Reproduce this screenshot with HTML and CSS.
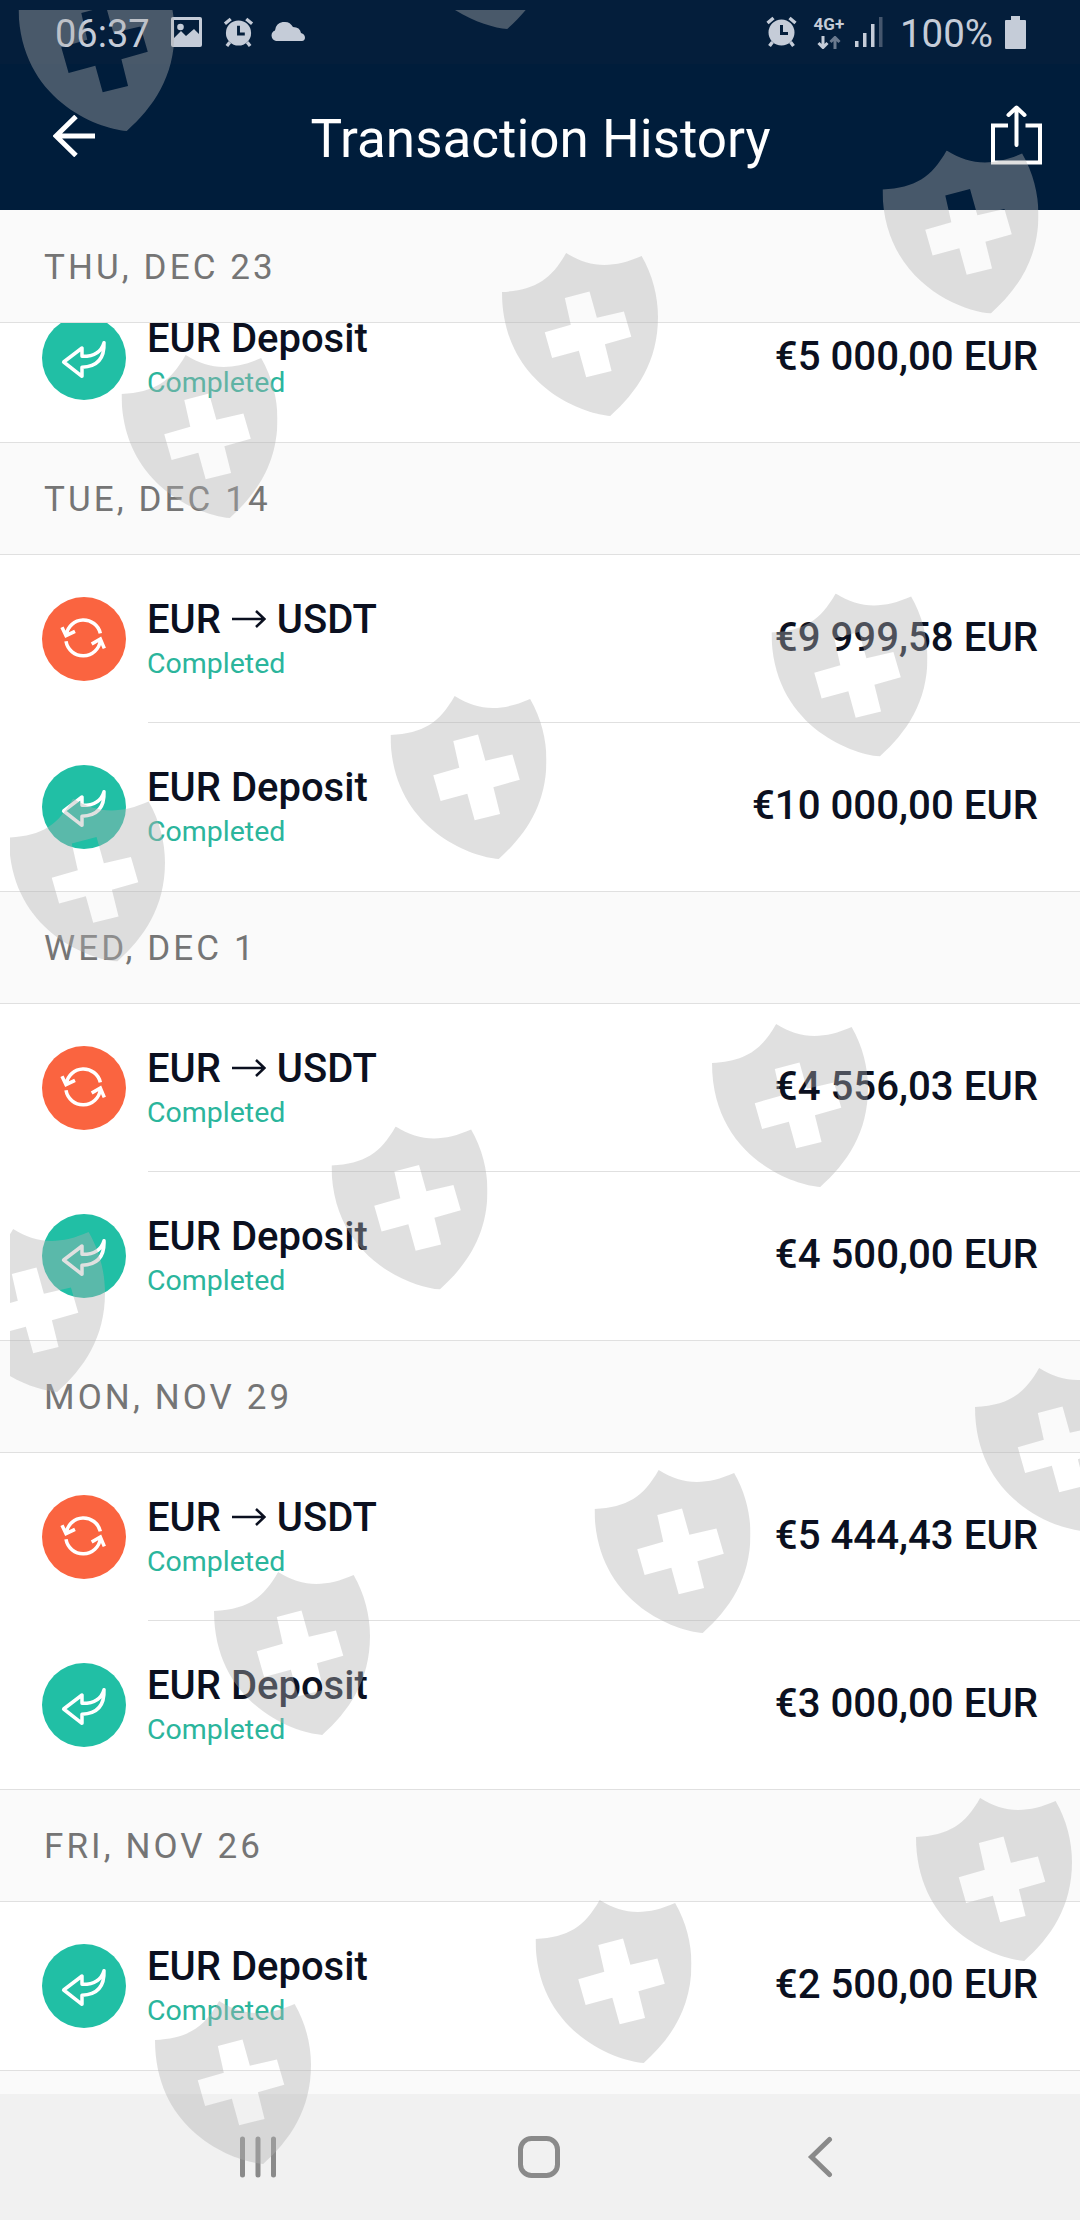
FILE: index.html
```html
<!DOCTYPE html>
<html lang="en">
  <head>
    <meta charset="UTF-8" />
    <meta name="viewport" content="width=device-width, initial-scale=1.0" />
    <title>Transaction History</title>
    <link rel="stylesheet" href="styles.css">
  </head>
  <body>
    <svg class="defs">
      <symbol id="shield" viewBox="66 69 467 488">
        <path fill-rule="evenodd" d="M66 186C165 180 212 150 258 69C330 115 400 115 484 78C517 135 533 200 533 260C533 395 470 485 390 557C300 550 66 460 66 186ZM254 204L272 284L194 306L216 383L296 362L318 441L394 422L374 342L453 320L431 244L350 263L328 184Z" />
      </symbol>
      <symbol id="deposit" viewBox="0 0 252 252">
        <path d="M65 138L120 96V121Q174 122 186 80Q189 151 120 154V181Z" />
      </symbol>
      <symbol id="swap" viewBox="0 0 252 252">
        <path d="M175 109A52 52 0 0 0 73 113M60 91L72 116L99 103M72 133A52 52 0 0 0 175 130M149 141L175 126L187 154" />
      </symbol>
      <symbol id="alarm" viewBox="0 0 32 32">
        <path d="M7 26L4 30M25 26L28 30M2 7L8 2M30 7L24 2" fill="none" stroke="currentColor" stroke-width="3.4" />
        <path fill-rule="evenodd" d="M16 3.500A13 13 0 1 0 16 29.500A13 13 0 1 0 16 3.500ZM14.500 9H17.500V16H22.500V19H14.500Z" />
      </symbol>
      <symbol id="arrow" viewBox="0 0 34 20">
        <path d="M0 10H32M24 2L32.500 10L24 18" />
      </symbol>
    </svg>

    <header class="top">
      <div class="status">
        <span class="time">06:37</span>
        <svg class="icon-image" viewBox="0 0 31 30">
          <path fill-rule="evenodd" d="M2 0H29Q31 0 31 2V28Q31 30 29 30H2Q0 30 0 28V2Q0 0 2 0ZM3 3V21L10 14L15 19L23 12L28 17V3Z" />
          <circle cx="9.500" cy="10" r="3.300" />
        </svg>
        <svg class="icon-alarm"><use href="#alarm" /></svg>
        <svg class="icon-cloud" viewBox="0 0 35 20">
          <path d="M6 20A5.500 5.500 0 0 1 5 9.500A9.600 9.600 0 0 1 23 6Q30 6 31 12Q35 13 35 17Q34.500 20 32 20Z" />
        </svg>
        <span class="spacer"></span>
        <svg class="icon-alarm right"><use href="#alarm" /></svg>
        <div class="network">
          <span>4G+</span>
          <svg viewBox="0 0 24 13">
            <path d="M6 0V11M1.500 7L6 11.500L10.500 7" />
            <path class="dim" d="M18 13V2M13.500 6L18 1.500L22.500 6" />
          </svg>
        </div>
        <svg class="icon-signal" viewBox="0 0 28 30">
          <path d="M0 24H3.500V30H0ZM8 16H11.500V30H8ZM16 7H19.500V30H16Z" />
          <path class="faded" d="M24 0H27.500V30H24Z" />
        </svg>
        <span class="percent">100%</span>
        <svg class="icon-battery" viewBox="0 0 21 33">
          <path d="M6 0H15V4H20Q21 4 21 5V32Q21 33 20 33H1Q0 33 0 32V5Q0 4 1 4H6Z" />
        </svg>
      </div>
      <div class="toolbar">
        <svg class="icon-back" viewBox="0 0 42 42">
          <path d="M42 21H3M23 1.500L3 21L23 40.500" />
        </svg>
        <h1>Transaction History</h1>
        <svg class="icon-share" viewBox="0 0 51 60">
          <path d="M17 20.500H2V57.500H49V20.500H34.500" />
          <path class="round" d="M25.500 40V3M17.500 10L25.500 2.500L33.500 10" />
        </svg>
      </div>
    </header>

    <main class="history">
      <section class="day">
        <h2>Thu, Dec 23</h2>
        <div class="row scrolled">
          <svg class="badge deposit"><use href="#deposit" /></svg>
          <div class="info">
            <p class="name">EUR Deposit</p>
            <p class="state">Completed</p>
          </div>
          <p class="amount">€5 000,00 EUR</p>
        </div>
      </section>

      <section class="day">
        <h2>Tue, Dec 14</h2>
        <div class="row">
          <svg class="badge swap"><use href="#swap" /></svg>
          <div class="info">
            <p class="name">EUR <svg class="arrow"><use href="#arrow" /></svg> USDT</p>
            <p class="state">Completed</p>
          </div>
          <p class="amount">€9 999,58 EUR</p>
        </div>
        <div class="row">
          <svg class="badge deposit"><use href="#deposit" /></svg>
          <div class="info">
            <p class="name">EUR Deposit</p>
            <p class="state">Completed</p>
          </div>
          <p class="amount">€10 000,00 EUR</p>
        </div>
      </section>

      <section class="day">
        <h2>Wed, Dec 1</h2>
        <div class="row">
          <svg class="badge swap"><use href="#swap" /></svg>
          <div class="info">
            <p class="name">EUR <svg class="arrow"><use href="#arrow" /></svg> USDT</p>
            <p class="state">Completed</p>
          </div>
          <p class="amount">€4 556,03 EUR</p>
        </div>
        <div class="row">
          <svg class="badge deposit"><use href="#deposit" /></svg>
          <div class="info">
            <p class="name">EUR Deposit</p>
            <p class="state">Completed</p>
          </div>
          <p class="amount">€4 500,00 EUR</p>
        </div>
      </section>

      <section class="day">
        <h2>Mon, Nov 29</h2>
        <div class="row">
          <svg class="badge swap"><use href="#swap" /></svg>
          <div class="info">
            <p class="name">EUR <svg class="arrow"><use href="#arrow" /></svg> USDT</p>
            <p class="state">Completed</p>
          </div>
          <p class="amount">€5 444,43 EUR</p>
        </div>
        <div class="row">
          <svg class="badge deposit"><use href="#deposit" /></svg>
          <div class="info">
            <p class="name">EUR Deposit</p>
            <p class="state">Completed</p>
          </div>
          <p class="amount">€3 000,00 EUR</p>
        </div>
      </section>

      <section class="day">
        <h2>Fri, Nov 26</h2>
        <div class="row">
          <svg class="badge deposit"><use href="#deposit" /></svg>
          <div class="info">
            <p class="name">EUR Deposit</p>
            <p class="state">Completed</p>
          </div>
          <p class="amount">€2 500,00 EUR</p>
        </div>
      </section>
      <div class="next-day"></div>
    </main>

    <nav class="nav">
      <svg viewBox="0 0 42 42"><path d="M5.500 3V39M21 3V39M36.500 3V39" /></svg>
      <svg viewBox="0 0 42 42"><rect x="2.500" y="2.500" width="37" height="37" rx="11" /></svg>
      <svg viewBox="0 0 42 42"><path d="M30.500 3.500L12.500 21L30.500 38.500" /></svg>
    </nav>

    <!-- watermark -->
    <svg class="watermark" viewBox="10 10 1070 2210">
      <use href="#shield" x="399" y="-134" width="156" height="163" />
      <use href="#shield" x="18.500" y="-32" width="156" height="163" />
      <use href="#shield" x="882.500" y="150.500" width="156" height="163" />
      <use href="#shield" x="502" y="253" width="156" height="163" />
      <use href="#shield" x="121.500" y="355" width="156" height="163" />
      <use href="#shield" x="771.500" y="593.500" width="156" height="163" />
      <use href="#shield" x="390.500" y="696" width="156" height="163" />
      <use href="#shield" x="9" y="798.500" width="156" height="163" />
      <use href="#shield" x="712" y="1024" width="156" height="163" />
      <use href="#shield" x="331.500" y="1126.500" width="156" height="163" />
      <use href="#shield" x="-51" y="1229" width="156" height="163" />
      <use href="#shield" x="975" y="1368" width="156" height="163" />
      <use href="#shield" x="594.500" y="1470" width="156" height="163" />
      <use href="#shield" x="214" y="1572" width="156" height="163" />
      <use href="#shield" x="916" y="1798" width="156" height="163" />
      <use href="#shield" x="535.500" y="1900" width="156" height="163" />
      <use href="#shield" x="155" y="2001" width="156" height="163" />
    </svg>
  </body>
</html>
```
FILE: styles.css
```css
* {
  box-sizing: border-box;
  margin: 0;
}

body {
  position: relative;
  display: flex;
  flex-direction: column;
  height: 2220px;
  overflow: hidden;
  font-family: Roboto, sans-serif;
  background-color: #fff;
  color: #0b1020;
}

svg {
  display: block;
  flex: none;
}

.defs {
  display: none;
}

/* header */
.top {
  position: relative;
  z-index: 2;
  flex: none;
  height: 210px;
  background-color: #001d3b;
}

.status {
  display: flex;
  align-items: center;
  height: 64px;
  padding: 0 54px 0 55px;
  background-color: #041e3b;
  color: #c5ccd8;
  fill: currentColor;
  font-size: 38.500px;
}

.time,
.percent {
  padding-top: 3px;
}

.time {
  font-size: 38px;
}

.icon-image {
  width: 31px;
  height: 30px;
  margin-left: 21px;
}

.icon-alarm {
  width: 31px;
  height: 31px;
  margin-left: 21px;
}

.icon-alarm.right {
  width: 33px;
  height: 32px;
}

.icon-cloud {
  width: 35px;
  height: 20px;
  margin: 0 0 2px 16px;
}

.spacer {
  flex: 1;
}

.network {
  display: flex;
  flex-direction: column;
  align-items: center;
  gap: 4px;
  width: 32px;
  margin-left: 15px;
  font-size: 17px;
  font-weight: 700;
  line-height: 16px;
}

.network svg {
  width: 24px;
  height: 13px;
  fill: none;
  stroke: currentColor;
  stroke-width: 3;
}

.network .dim {
  stroke: #6b7a8e;
}

.icon-signal {
  width: 28px;
  height: 30px;
  margin-left: 10px;
}

.icon-signal .faded {
  fill: #45566d;
}

.percent {
  margin-left: 17px;
}

.icon-battery {
  width: 21px;
  height: 33px;
  margin-left: 12px;
}

.toolbar {
  display: flex;
  align-items: center;
  justify-content: space-between;
  height: 146px;
  padding: 0 38px 0 53px;
  fill: none;
  stroke: #fff;
}

.icon-back {
  width: 42px;
  height: 42px;
  margin-bottom: 2px;
  stroke-width: 5;
}

h1 {
  margin: 3px 5px 0 0;
  color: #fff;
  font-size: 53px;
  font-weight: 400;
}

.icon-share {
  width: 51px;
  height: 60px;
  margin-bottom: 5px;
  stroke-width: 4;
}

.round {
  stroke-linecap: round;
  stroke-linejoin: round;
}

/* list */
.history {
  flex: 1;
  overflow: hidden;
}

h2 {
  position: relative;
  z-index: 1;
  height: 113px;
  padding-left: 44px;
  border-top: 1px solid #e0e0e0;
  border-bottom: 1px solid #e0e0e0;
  background-color: #fafafa;
  color: #757575;
  font-size: 35px;
  font-weight: 400;
  letter-spacing: 3.100px;
  line-height: 114px;
  text-transform: uppercase;
}

.day:first-child h2 {
  border-top-color: #fafafa;
}

.row {
  display: flex;
  align-items: center;
  height: 168px;
  padding: 0 42px;
}

.row:not(:last-child) {
  background: linear-gradient(#e0e0e0, #e0e0e0) 148px 100% / 100% 1px no-repeat;
}

.scrolled {
  margin-top: -49px;
}

.badge {
  width: 84px;
  height: 84px;
  border-radius: 50%;
  fill: none;
  stroke: #fff;
  stroke-width: 10.500;
  stroke-linecap: round;
  stroke-linejoin: round;
}

.deposit {
  background-color: #21bfa5;
}

.swap {
  background-color: #fa6440;
  stroke-linecap: butt;
  stroke-linejoin: miter;
}

.info {
  flex: 1;
  margin: 4px 0 0 21px;
}

.name {
  font-size: 40px;
  font-weight: 500;
  line-height: 46px;
}

.arrow {
  display: inline-block;
  width: 34px;
  height: 20px;
  margin: 0 1px;
  fill: none;
  stroke: currentColor;
  stroke-width: 2.500;
  vertical-align: 4px;
}

.state {
  color: #2bb59c;
  font-size: 28.500px;
  line-height: 42px;
}

.amount {
  margin-bottom: 3px;
  font-size: 40.200px;
  font-weight: 500;
}

.next-day {
  height: 40px;
  border-top: 1px solid #e0e0e0;
  background-color: #fafafa;
}

/* system navigation */
.nav {
  display: grid;
  flex: none;
  grid-template-columns: repeat(3, 281px);
  align-items: center;
  justify-content: center;
  justify-items: center;
  height: 126px;
  padding-right: 2px;
  background-color: #f1f1f1;
}

.nav svg {
  width: 42px;
  height: 42px;
  fill: none;
  stroke: #8a8a8a;
  stroke-width: 5;
  stroke-linecap: round;
}

.watermark {
  position: absolute;
  z-index: 3;
  top: 10px;
  left: 10px;
  width: 1070px;
  height: 2210px;
  fill: rgba(178, 178, 178, 0.4);
}
```
